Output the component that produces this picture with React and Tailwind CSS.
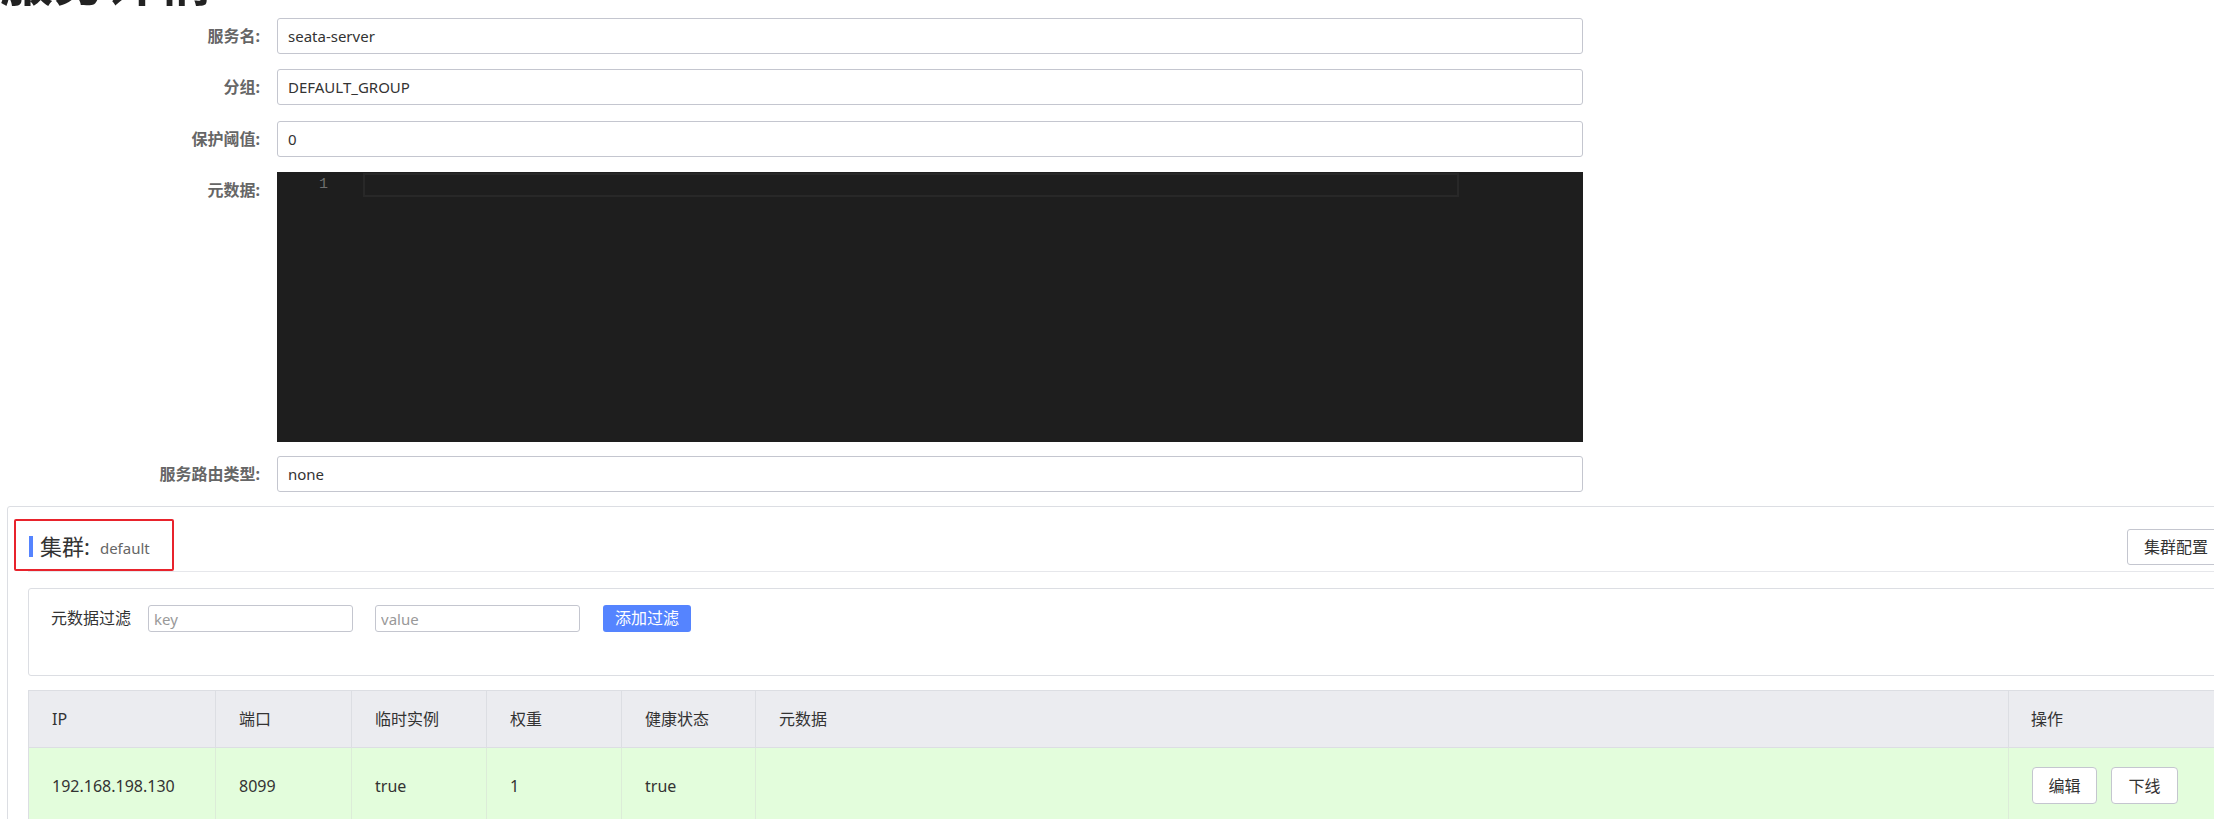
const font = "font-['Noto_Sans','Noto_Sans_CJK_SC',sans-serif]";

const FormRow = ({ label, children, mb = "mb-[15px]" }) => (
  <div className={`flex items-start ${mb}`}>
    <div className="w-[260px] shrink-0 text-right text-[16px] leading-[36px] font-bold text-[#666]">
      {label}
    </div>
    <div className="ml-[17px]">{children}</div>
  </div>
);

const TextBox = ({ value }) => (
  <div className="w-[1306px] h-[36px] border border-[#c4c6cf] rounded-[3px] pl-[10px] flex items-center text-[15px] text-[#333]">
    {value}
  </div>
);

const cols = [
  { title: "IP", w: "w-[187px]", val: "192.168.198.130" },
  { title: "端口", w: "w-[136px]", val: "8099" },
  { title: "临时实例", w: "w-[135px]", val: "true" },
  { title: "权重", w: "w-[135px]", val: "1" },
  { title: "健康状态", w: "w-[134px]", val: "true" },
  { title: "元数据", w: "w-[1253px]", val: "" },
];

const App = () => {
  return (
    <div className={`relative w-[2214px] h-[819px] overflow-hidden bg-white ${font}`}>
      <h1 className="-mt-[45px] mb-[11px] text-[53px] leading-[52px] font-bold text-[#222] whitespace-nowrap">
        服务详情
      </h1>

      <FormRow label="服务名:">
        <TextBox value="seata-server" />
      </FormRow>
      <FormRow label="分组:" mb="mb-[16px]">
        <TextBox value="DEFAULT_GROUP" />
      </FormRow>
      <FormRow label="保护阈值:" mb="mb-[15px]">
        <TextBox value="0" />
      </FormRow>
      <FormRow label="元数据:" mb="mb-[14px]">
        <div className="w-[1306px] h-[270px] bg-[#1e1e1e] flex items-start pt-[1px]">
          <div className="w-[86px] shrink-0 pr-[35px] text-right text-[15px] leading-[24px] text-[#6e6e6e] font-['Liberation_Mono',monospace]">
            1
          </div>
          <div className="w-[1096px] h-[24px] border-2 border-[#282828]" />
        </div>
      </FormRow>
      <FormRow label="服务路由类型:" mb="mb-[14px]">
        <TextBox value="none" />
      </FormRow>

      <div className="ml-[7px] w-[2239px] border border-[#dcdee3] rounded-[3px] px-[20px]">
        <div className="h-[65px] border-b border-[#e6e7eb] flex items-center">
          <div className="mt-[14px] flex items-center">
            <span className="ml-[1px] w-[4px] h-[21px] bg-[#5584ff]" />
            <span className="ml-[7px] text-[22px] leading-[30px] text-[#333]">集群:</span>
            <span className="ml-[10px] text-[15px] leading-[30px] text-[#666] pt-[3px]">default</span>
          </div>
          <button className="ml-auto mt-[16px] h-[36px] px-[16px] border border-[#c4c6cf] rounded-[3px] bg-white text-[16px] text-[#333]">
            集群配置
          </button>
        </div>

        <div className="mt-[16px] h-[88px] border border-[#dcdee3] rounded-[3px] pt-[16px] pl-[22px] flex items-start">
          <span className="text-[16px] leading-[27px] text-[#333]">元数据过滤</span>
          <input
            placeholder="key"
            className="ml-[17px] w-[205px] h-[27px] border border-[#c4c6cf] rounded-[3px] px-[5px] text-[15px] text-[#333] placeholder:text-[#999] outline-none"
          />
          <input
            placeholder="value"
            className="ml-[22px] w-[205px] h-[27px] border border-[#c4c6cf] rounded-[3px] px-[5px] text-[15px] text-[#333] placeholder:text-[#999] outline-none"
          />
          <button className="ml-[23px] w-[88px] h-[27px] rounded-[3px] bg-[#5584ff] text-white text-[16px] leading-[27px]">
            添加过滤
          </button>
        </div>

        <table className="mt-[14px] w-full table-fixed border-collapse border border-[#dcdee3] text-[16px] text-[#333]">
          <thead>
            <tr className="h-[57px] bg-[#ebecf0] border-b border-[#dcdee3]">
              {cols.map((c) => (
                <th key={c.title} className={`${c.w} pl-[23px] text-left font-normal border-r border-[#dcdee3]`}>
                  {c.title}
                </th>
              ))}
              <th className="pl-[22px] text-left font-normal">操作</th>
            </tr>
          </thead>
          <tbody>
            <tr className="h-[76px] bg-[#e3fddc]">
              {cols.map((c) => (
                <td key={c.title} className="pl-[23px] border-r border-[#dcecd8]">
                  {c.val}
                </td>
              ))}
              <td className="pl-[23px]">
                <div className="flex items-center gap-[14px]">
                  <button className="w-[65px] h-[37px] border border-[#c4c6cf] rounded-[4px] bg-white text-[16px] text-[#333]">
                    编辑
                  </button>
                  <button className="w-[67px] h-[37px] border border-[#c4c6cf] rounded-[4px] bg-white text-[16px] text-[#333]">
                    下线
                  </button>
                </div>
              </td>
            </tr>
          </tbody>
        </table>
      </div>

      <div className="absolute left-[14px] top-[519px] w-[160px] h-[52px] border-2 border-[#e8232c] rounded-[2px] pointer-events-none" />
    </div>
  );
};

export default App;
